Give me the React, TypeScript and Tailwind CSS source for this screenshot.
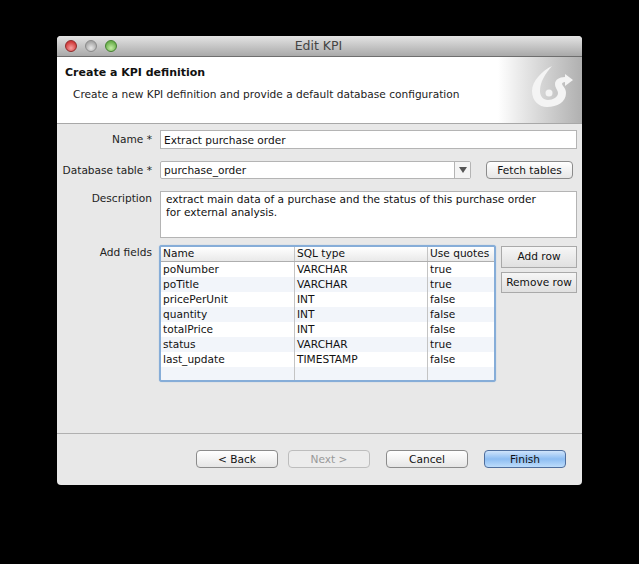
const font = { fontFamily: '"DejaVu Sans", sans-serif' };

const rows = [
  ["poNumber", "VARCHAR", "true"],
  ["poTitle", "VARCHAR", "true"],
  ["pricePerUnit", "INT", "false"],
  ["quantity", "INT", "false"],
  ["totalPrice", "INT", "false"],
  ["status", "VARCHAR", "true"],
  ["last_update", "TIMESTAMP", "false"],
  ["", "", ""],
];

function Dot({ cls }: { cls: string }) {
  return <span className={`block w-[12px] h-[12px] rounded-full border ${cls}`} />;
}

function Label({ children, cls }: { children: string; cls: string }) {
  return <div className={`w-[95px] mr-[8px] shrink-0 text-right whitespace-nowrap text-[10.6px] leading-[15px] text-[#222] ${cls}`}>{children}</div>;
}

function MacButton({ children, cls }: { children: string; cls: string }) {
  return (
    <button className={`h-[18px] rounded-[4px] border text-[10.6px] leading-[16px] text-center ${cls}`}>{children}</button>
  );
}

const normal = "border-[#8b8b8b] bg-gradient-to-b from-[#ffffff] to-[#e6e6e6] text-[#111]";

export default function App() {
  return (
    <div className="w-[639px] h-[564px] bg-black pt-[36px] pl-[57px] overflow-hidden antialiased" style={font}>
      <div className="w-[525px] h-[449px] rounded-[4px] bg-[#e8e8e8] overflow-hidden flex flex-col">
        <div className="relative h-[21px] shrink-0 flex items-center justify-center bg-gradient-to-b from-[#e4e4e4] to-[#a9a9a9] border-b border-[#6e6e6e]">
          <div className="absolute left-[8px] top-[4px] flex gap-[8px]">
            <Dot cls="border-[#8f2a2a] bg-[radial-gradient(circle_at_50%_70%,#f7a0a0,#d13c3c_70%)]" />
            <Dot cls="border-[#8a8a8a] bg-[radial-gradient(circle_at_50%_70%,#e8e8e8,#a8a8a8_70%)]" />
            <Dot cls="border-[#44802f] bg-[radial-gradient(circle_at_50%_70%,#c4eda4,#6cb04d_70%)]" />
          </div>
          <span className="-ml-[2px] text-[12.5px] leading-[16px] text-[#444]">Edit KPI</span>
        </div>

        <div className="relative h-[67px] shrink-0 bg-gradient-to-r from-white from-[84%] to-[#b0b0b0] border-b border-[#a8a8a8]">
          <div className="pl-[8px] pt-[8px] text-[11px] leading-[15px] font-bold text-[#111]">Create a KPI definition</div>
          <div className="pl-[16px] pt-[7px] text-[10.6px] leading-[15px] text-[#222]">
            Create a new KPI definition and provide a default database configuration
          </div>
          <svg className="absolute left-[473px] top-[3px]" width="46" height="50" viewBox="0 0 46 50" fill="none">
            <path d="M22 6 C12 11 2 21 2 31 C2 41 9 47 17 47 C27 47 36 42 36 33 C36 28 33 27 32 24 C32 23 33 22 35 22 L35 26 L43 20 L35 14 L35 17 C29 17 25 20 25 24 C25 28 28 30 28 33 C28 37 23 40 18 40 C13 40 10 36 10 31 C10 22 15 14 22 6 Z" fill="#f4f4f4" />
            <circle cx="19" cy="33" r="3.5" fill="#f4f4f4" />
          </svg>
        </div>

        <div className="flex-1 pt-[6px] flex flex-col">
          <div className="flex items-start">
            <Label cls="pt-[2px]">Name *</Label>
            <div className="w-[417px] h-[19px] bg-white border border-[#b4b4b4] px-[3px] text-[10.6px] leading-[19px] text-[#111]">
              Extract purchase order
            </div>
          </div>

          <div className="flex items-start mt-[12px]">
            <Label cls="pt-[2px]">Database table *</Label>
            <div className="w-[311px] h-[18px] bg-white border border-[#b4b4b4] rounded-[2px] flex text-[10.6px] leading-[17px] text-[#111]">
              <span className="flex-1 px-[3px]">purchase_order</span>
              <span className="w-[16px] border-l border-[#b4b4b4] bg-[#f4f4f4] flex items-center justify-center">
                <svg width="8" height="6" viewBox="0 0 8 6"><path d="M0 0h8L4 6z" fill="#555" /></svg>
              </span>
            </div>
            <MacButton cls={`${normal} ml-[15px] w-[87px]`}>Fetch tables</MacButton>
          </div>

          <div className="flex items-start mt-[12px]">
            <Label cls="">Description</Label>
            <div className="w-[417px] h-[47px] bg-white border border-[#b4b4b4] px-[5px] pt-[1px] text-[10.6px] leading-[13px] text-[#111]">
              extract main data of a purchase and the status of this purchase order<br />for external analysis.
            </div>
          </div>

          <div className="flex items-start mt-[7px]">
            <Label cls="">Add fields</Label>
            <div className="-ml-[1px] w-[337px] h-[137px] bg-white border-[2px] border-[#86add8] rounded-[3px] overflow-hidden text-[10.6px] text-[#111] whitespace-nowrap shadow-[0_0_1px_#86add8]">
              <div className="grid grid-cols-[133px_133px_1fr] h-[15px] bg-gradient-to-b from-[#ffffff] to-[#e9e9e9] border-b border-[#aeaeae] leading-[13px]">
                <span className="pl-[2px]">Name</span>
                <span className="pl-[2px] border-l border-[#c4c4c4]">SQL type</span>
                <span className="pl-[2px] border-l border-[#c4c4c4]">Use quotes</span>
              </div>
              {rows.map((r, i) => (
                <div key={i} className={`grid grid-cols-[133px_133px_1fr] h-[15px] leading-[15px] ${i % 2 ? "bg-[#f2f5fa]" : "bg-white"}`}>
                  <span className="pl-[2px]">{r[0]}</span>
                  <span className="pl-[2px] border-l border-[#c4c4c4]">{r[1]}</span>
                  <span className="pl-[2px] border-l border-[#c4c4c4]">{r[2]}</span>
                </div>
              ))}
            </div>
            <div className="ml-[5px] mt-[1px] w-[76px] flex flex-col gap-[4px]">
              <button className="h-[22px] border border-[#a9a9a9] bg-gradient-to-b from-[#f6f6f6] to-[#e0e0e0] text-[10.6px] text-[#111]">Add row</button>
              <button className="h-[21px] border border-[#a9a9a9] bg-gradient-to-b from-[#f6f6f6] to-[#e0e0e0] text-[10.6px] text-[#111]">Remove row</button>
            </div>
          </div>

          <div className="mt-[51px] border-t border-[#b0b0b0] pt-[16px] pl-[139px] flex">
            <MacButton cls={`${normal} w-[82px]`}>&lt; Back</MacButton>
            <MacButton cls="ml-[10px] w-[82px] border-[#bdbdbd] bg-[#ececec] text-[#999]">Next &gt;</MacButton>
            <MacButton cls={`${normal} ml-[16px] w-[82px]`}>Cancel</MacButton>
            <MacButton cls="ml-[16px] w-[82px] border-[#4f6f9e] bg-gradient-to-b from-[#cfe4fb] via-[#8dbdf2] to-[#bcdcfb] text-[#111]">Finish</MacButton>
          </div>
        </div>
      </div>
    </div>
  );
}
